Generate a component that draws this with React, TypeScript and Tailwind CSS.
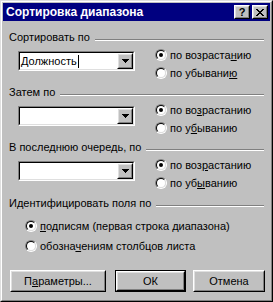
import React from "react";

function Raised({ className = "", children }: { className?: string; children?: React.ReactNode }) {
  return (
    <div className={`border border-t-white border-l-white border-r-black border-b-black ${className}`}>
      <div className="flex h-full w-full items-center justify-center border border-t-[#dfdfdf] border-l-[#dfdfdf] border-r-[#808080] border-b-[#808080]">
        {children}
      </div>
    </div>
  );
}

function Radio({ checked }: { checked?: boolean }) {
  return (
    <div className="h-[12px] w-[12px] shrink-0 rounded-full border border-t-[#808080] border-l-[#808080] border-r-white border-b-white">
      <div className="flex h-full w-full items-center justify-center rounded-full border border-t-black border-l-black border-r-[#dfdfdf] border-b-[#dfdfdf] bg-white">
        {checked && <div className="h-[4px] w-[4px] rounded-full bg-black" />}
      </div>
    </div>
  );
}

function Header({ label }: { label: string }) {
  return (
    <div className="ml-[6px] mr-[6px] flex h-[13px] items-center leading-[13px]">
      <span className="whitespace-nowrap">{label}</span>
      <div className="ml-[5px] mt-[4px] h-[2px] flex-1 border-t border-b border-t-[#808080] border-b-white" />
    </div>
  );
}

function Combo({ value }: { value?: string }) {
  return (
    <div className="h-[20px] w-[117px] shrink-0 border border-t-[#808080] border-l-[#808080] border-r-white border-b-white">
      <div className="flex h-full w-full border border-t-black border-l-black border-r-[#dfdfdf] border-b-[#dfdfdf] bg-white">
        <div className="flex flex-1 items-center pl-[1px] leading-[13px]">
          {value && (
            <>
              <span>{value}</span>
              <span className="ml-[1px] inline-block h-[13px] w-[1px] bg-black" />
            </>
          )}
        </div>
        <Raised className="h-[16px] w-[16px] bg-[#c0c0c0]">
          <svg width="7" height="4" viewBox="0 0 7 4">
            <path d="M0 0h7v1H0zM1 1h5v1H1zM2 2h3v1H2zM3 3h1v1H3z" fill="#000" />
          </svg>
        </Raised>
      </div>
    </div>
  );
}

function RadioRow({ checked, children }: { checked?: boolean; children: React.ReactNode }) {
  return (
    <div className="flex h-[18px] items-center gap-[3px] leading-[13px]">
      <Radio checked={checked} />
      <span className="whitespace-nowrap">{children}</span>
    </div>
  );
}

function SortSection({
  label,
  value,
  asc,
  desc,
  last,
}: {
  label: string;
  value?: string;
  asc: React.ReactNode;
  desc: React.ReactNode;
  last?: boolean;
}) {
  return (
    <div>
      <Header label={label} />
      <div className={`flex ${last ? "h-[43px]" : "h-[42px]"}`}>
        <div className="ml-[15px] mt-[7px]">
          <Combo value={value} />
        </div>
        <div className="ml-[20px] mt-[2px] flex flex-col">
          <RadioRow checked>{asc}</RadioRow>
          <RadioRow>{desc}</RadioRow>
        </div>
      </div>
    </div>
  );
}

function Button({ className = "", children, isDefault }: { className?: string; children: React.ReactNode; isDefault?: boolean }) {
  const btn = <Raised className="h-full w-full bg-[#c0c0c0]">{children}</Raised>;
  if (isDefault) {
    return <div className={`border border-black ${className}`}>{btn}</div>;
  }
  return <div className={className}>{btn}</div>;
}

export default function App() {
  return (
    <div className="h-[302px] w-[273px] border border-t-[#dfdfdf] border-l-[#dfdfdf] border-r-black border-b-black bg-[#c0c0c0] font-['Liberation_Sans',Arial,sans-serif] text-[11px] text-black">
      <div className="flex h-full w-full flex-col border border-t-white border-l-white border-r-[#808080] border-b-[#808080] p-[1px]">
        <div className="flex h-[18px] items-center bg-[#000080] pl-[3px] pr-[2px]">
          <span className="flex-1 text-[12px] font-bold leading-[14px] text-white">Сортировка диапазона</span>
          <Raised className="h-[14px] w-[16px] bg-[#c0c0c0]">
            <span className="text-[11px] font-bold leading-[10px]">?</span>
          </Raised>
          <Raised className="ml-[2px] h-[14px] w-[16px] bg-[#c0c0c0]">
            <svg width="8" height="7" viewBox="0 0 8 7">
              <path d="M0 0h2v1H0zM6 0h2v1H6zM1 1h2v1H1zM5 1h2v1H5zM2 2h4v1H2zM3 3h2v1H3zM2 4h4v1H2zM1 5h2v1H1zM5 5h2v1H5zM0 6h2v1H0zM6 6h2v1H6z" fill="#000" />
            </svg>
          </Raised>
        </div>

        <div className="mt-[10px] flex flex-col">
          <SortSection
            label="Сортировать по"
            value="Должность"
            asc={<>по возраста<span className="underline">н</span>ию</>}
            desc={<>по убывани<span className="underline">ю</span></>}
          />
          <SortSection
            label="Затем по"
            asc={<>по во<span className="underline">з</span>растанию</>}
            desc={<>по у<span className="underline">б</span>ыванию</>}
          />
          <SortSection
            label="В последнюю очередь, по"
            last
            asc={<>по воз<span className="underline">р</span>астанию</>}
            desc={<>по уб<span className="underline">ы</span>ванию</>}
          />
          <Header label="Идентифицировать поля по" />
          <div className="ml-[22px] mt-[7px] flex flex-col gap-[2px]">
            <RadioRow checked>
              <span className="underline">п</span>одписям (первая строка диапазона)
            </RadioRow>
            <RadioRow>
              обозна<span className="underline">ч</span>ениям столбцов листа
            </RadioRow>
          </div>
          <div className="ml-[7px] mt-[15px] flex h-[22px]">
            <Button className="w-[96px]">
              <span>П<span className="underline">а</span>раметры...</span>
            </Button>
            <Button className="ml-[9px] w-[71px]" isDefault>
              <span>ОК</span>
            </Button>
            <Button className="ml-[7px] w-[72px]">
              <span>Отмена</span>
            </Button>
          </div>
        </div>
      </div>
    </div>
  );
}
